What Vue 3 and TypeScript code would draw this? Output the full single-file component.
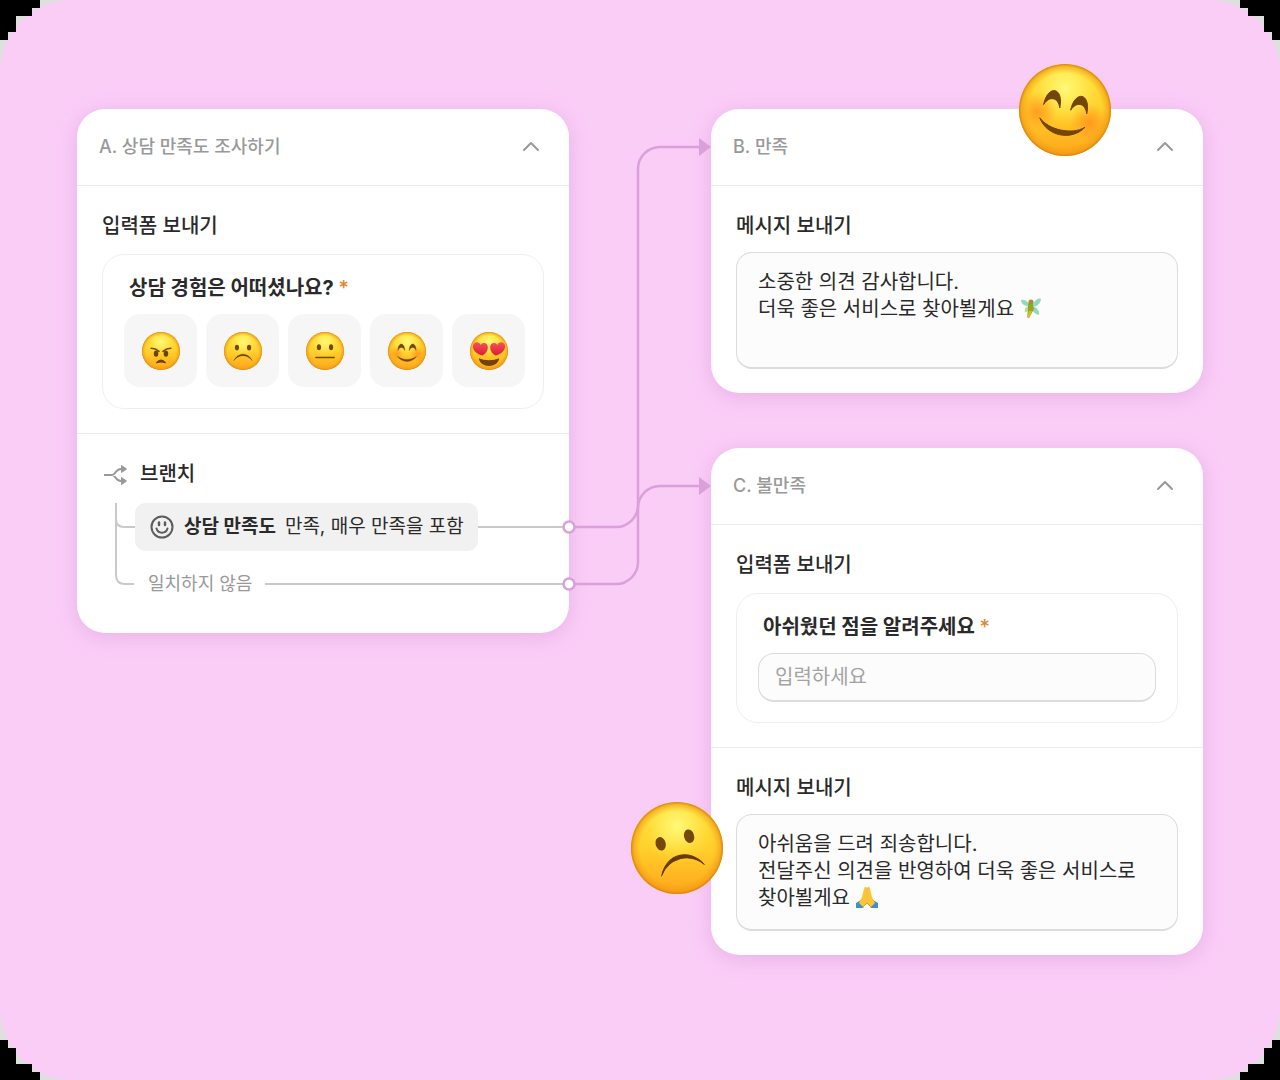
<script setup lang="ts">
import { ref } from 'vue'

interface Rating {
  id: string
  label: string
}

const ratings: Rating[] = [
  { id: 'angry', label: '매우 불만족' },
  { id: 'sad', label: '불만족' },
  { id: 'neutral', label: '보통' },
  { id: 'smile', label: '만족' },
  { id: 'love', label: '매우 만족' },
]

const corners: string[] = ['top-left', 'top-right', 'bottom-left', 'bottom-right']
const answer = ref('')
</script>

<template>
  <main class="page">
    <svg class="sprite" aria-hidden="true">
      <defs>
        <linearGradient id="face-base" x1="0" y1="0" x2="0" y2="1">
          <stop offset="0" stop-color="#ffdf3c" />
          <stop offset="0.5" stop-color="#ffd02c" />
          <stop offset="1" stop-color="#ffa51a" />
        </linearGradient>
        <radialGradient id="face-light" cx="0.5" cy="0.26" r="0.42">
          <stop offset="0" stop-color="#fff978" />
          <stop offset="0.4" stop-color="#fff060" stop-opacity="0.75" />
          <stop offset="1" stop-color="#ffdd35" stop-opacity="0" />
        </radialGradient>
        <radialGradient id="face-rim" cx="0.5" cy="0.5" r="0.5">
          <stop offset="0.8" stop-color="#f39a10" stop-opacity="0" />
          <stop offset="0.94" stop-color="#ee9612" stop-opacity="0.55" />
          <stop offset="1" stop-color="#d9820f" />
        </radialGradient>
        <radialGradient id="blush">
          <stop offset="0" stop-color="#ff7c18" stop-opacity="0.6" />
          <stop offset="0.4" stop-color="#ff841a" stop-opacity="0.4" />
          <stop offset="1" stop-color="#ff8a1a" stop-opacity="0" />
        </radialGradient>
        <linearGradient id="heart" x1="0" y1="0" x2="0" y2="1">
          <stop offset="0" stop-color="#f9505c" />
          <stop offset="1" stop-color="#d81f33" />
        </linearGradient>
      </defs>
      <symbol id="face" viewBox="0 0 100 100">
        <circle cx="50" cy="50" r="50" fill="url(#face-base)" />
        <circle cx="50" cy="50" r="50" fill="url(#face-light)" />
        <circle cx="50" cy="50" r="50" fill="url(#face-rim)" />
      </symbol>
      <symbol id="angry" viewBox="0 0 100 100">
        <ellipse cx="37" cy="57" rx="6" ry="8" fill="#6d420b" />
        <ellipse cx="63" cy="57" rx="6" ry="8" fill="#6d420b" />
        <path d="M24 43C30 43 38 45 45 51M76 43C70 43 62 45 55 51" fill="none" stroke="#7b4a0c" stroke-width="4" stroke-linecap="round" />
        <path d="M38 81Q50 67 62 81Q50 77 38 81Z" fill="#6d420b" stroke="#6d420b" stroke-width="3" stroke-linejoin="round" />
      </symbol>
      <symbol id="sad" viewBox="0 0 100 100">
        <ellipse cx="34" cy="41" rx="5.5" ry="7.5" fill="#74470c" />
        <ellipse cx="66" cy="41" rx="5.5" ry="7.5" fill="#74470c" />
        <path d="M26 75C37 53 63 53 74 75C62 58 38 58 26 75Z" fill="#673b08" stroke="#673b08" stroke-linejoin="round" />
      </symbol>
      <symbol id="neutral" viewBox="0 0 100 100">
        <ellipse cx="34" cy="40" rx="5.5" ry="8" fill="#74470c" />
        <ellipse cx="66" cy="40" rx="5.5" ry="8" fill="#74470c" />
        <path d="M26 67H74" stroke="#74470c" stroke-width="4" stroke-linecap="round" />
      </symbol>
      <symbol id="smile" viewBox="0 0 100 100">
        <circle cx="21" cy="58" r="21" fill="url(#blush)" />
        <circle cx="79" cy="58" r="21" fill="url(#blush)" />
        <path d="M26 49C26 26 44 26 44 49C40 38 30 38 26 49ZM56 49C56 26 74 26 74 49C70 38 60 38 56 49Z" fill="#744508" stroke="#744508" stroke-linejoin="round" />
        <path d="M25 64C37 75 63 75 75 64C64 82 36 82 25 64Z" fill="#744508" stroke="#744508" stroke-linejoin="round" />
      </symbol>
      <symbol id="love" viewBox="0 0 100 100">
        <path d="M23 69C38 76 62 76 77 69C73 96 27 96 23 69Z" fill="#72430c" />
        <path d="M33 62C18 59 5 47 8 35C11 24 25 25 28 34C34 25 47 29 47 40C47 50 40 57 33 62Z" fill="url(#heart)" />
        <path d="M67 62C82 59 95 47 92 35C89 24 75 25 72 34C66 25 53 29 53 40C53 50 60 57 67 62Z" fill="url(#heart)" />
      </symbol>
      <symbol id="chevron" viewBox="0 0 24 24">
        <path d="M5 15L12 8L19 15" fill="none" stroke="#989898" stroke-width="2" stroke-linecap="round" stroke-linejoin="round" />
      </symbol>
    </svg>

    <div class="canvas">
      <section class="card">
        <header class="card-head">
          <h2>A. 상담 만족도 조사하기</h2>
          <button class="toggle" type="button" aria-label="접기"><svg viewBox="0 0 24 24"><use href="#chevron" /></svg></button>
        </header>
        <div class="block">
          <h3>입력폼 보내기</h3>
          <div class="panel">
            <p class="question">상담 경험은 어떠셨나요? <span class="required">*</span></p>
            <div class="ratings">
              <button v-for="rating in ratings" :key="rating.id" class="rating" type="button" :aria-label="rating.label">
                <svg viewBox="0 0 100 100"><use href="#face" /><use :href="'#' + rating.id" /></svg>
              </button>
            </div>
          </div>
        </div>
        <div class="block branch">
          <h3 class="branch-title">
            <svg class="branch-icon" viewBox="0 0 24 24" fill="none" stroke="#999" stroke-width="2">
              <path d="M0 13H8M18 7H17C11 7 12 13 8 13C12 13 11 19 17 19H18" />
              <path d="M17.500 3.500L22.500 7L17.500 10.500ZM17.500 15.500L22.500 19L17.500 22.500Z" fill="#999" stroke-width="1" stroke-linejoin="round" />
            </svg>
            브랜치
          </h3>
          <div class="tree">
            <svg class="tree-lines" viewBox="0 0 21 105" fill="none" stroke="#c9c9c9" stroke-width="2">
              <path d="M2 0V72Q2 81 11 81H20M2 16Q2 24 10 24H21" />
            </svg>
            <div class="rows">
              <div class="row">
                <div class="chip">
                  <svg class="chip-icon" viewBox="0 0 24 24" fill="none" stroke="#5c5c5c" stroke-width="2">
                    <circle cx="12" cy="12" r="10.500" />
                    <path d="M6.500 13.500C8 19 16 19 17.500 13.500" stroke-linecap="round" />
                    <path d="M9 7.500V10M15 7.500V10" stroke-width="2.500" stroke-linecap="round" />
                  </svg>
                  <b>상담 만족도</b>
                  <span>만족, 매우 만족을 포함</span>
                </div>
                <i class="line"></i>
              </div>
              <div class="row">
                <span class="otherwise">일치하지 않음</span>
                <i class="line"></i>
              </div>
            </div>
          </div>
        </div>
      </section>

      <svg class="links" viewBox="0 0 142 500" fill="none" stroke="#daa0da" stroke-width="2.500" aria-hidden="true">
        <path d="M0 418H47A22 22 0 0 0 69 396V60A22 22 0 0 1 91 38H132" />
        <path d="M0 475H47A22 22 0 0 0 69 453V399A22 22 0 0 1 91 377H132" />
        <path d="M130 29L142 38L130 47ZM130 368L142 377L130 386Z" fill="#daa0da" stroke="none" />
        <circle cx="0" cy="418" r="5.500" fill="#fff" />
        <circle cx="0" cy="475" r="5.500" fill="#fff" />
      </svg>

      <div class="stack">
        <section class="card">
          <svg class="sticker happy" viewBox="0 0 100 100" role="img" aria-label="만족">
            <use href="#face" />
            <use href="#smile" transform="rotate(12 50 50)" />
          </svg>
          <header class="card-head">
            <h2>B. 만족</h2>
            <button class="toggle" type="button" aria-label="접기"><svg viewBox="0 0 24 24"><use href="#chevron" /></svg></button>
          </header>
          <div class="block">
            <h3>메시지 보내기</h3>
            <div class="message" role="textbox" aria-multiline="true" contenteditable="true">
              소중한 의견 감사합니다.<br />더욱 좋은 서비스로 찾아뵐게요
              <svg class="inline-emoji" viewBox="0 0 22 22">
                <path d="M11 10C6 9 1 8 1 3C5 2 9 5 11 10ZM12 10C13 5 18 0 21 2C21 6 17 10 12 10ZM12 10C16 9 20 14 19 18C15 17 12 15 12 10Z" fill="#8fdcbc" />
                <path d="M9 10C6 9 4 12 5 15C8 15 9 13 9 10Z" fill="#b6dc8c" />
                <path d="M9 5Q13 3 13 8L14 12L9 21L7 20L8 13L8 8Z" fill="#95a526" />
                <path d="M9 14L12 14L9 21L7 20Z" fill="#dfb73d" />
                <circle cx="11" cy="5" r="2.500" fill="#a98a35" />
              </svg>
            </div>
          </div>
        </section>

        <section class="card">
          <svg class="sticker unhappy" viewBox="0 0 100 100" role="img" aria-label="불만족">
            <use href="#face" />
            <use href="#sad" transform="rotate(-15 50 50)" />
          </svg>
          <header class="card-head">
            <h2>C. 불만족</h2>
            <button class="toggle" type="button" aria-label="접기"><svg viewBox="0 0 24 24"><use href="#chevron" /></svg></button>
          </header>
          <div class="block">
            <h3>입력폼 보내기</h3>
            <div class="panel">
              <label class="question" for="answer">아쉬웠던 점을 알려주세요 <span class="required">*</span></label>
              <input id="answer" v-model="answer" class="answer" type="text" placeholder="입력하세요" />
            </div>
          </div>
          <div class="block">
            <h3>메시지 보내기</h3>
            <div class="message" role="textbox" aria-multiline="true" contenteditable="true">
              아쉬움을 드려 죄송합니다.<br />전달주신 의견을 반영하여 더욱 좋은 서비스로<br />찾아뵐게요
              <svg class="inline-emoji" viewBox="0 0 22 22">
                <path d="M0 17L5 14L9 19L7 22H0ZM22 17L17 14L13 19L15 22H22Z" fill="#3d8fd0" />
                <path d="M10.500 1Q8.500 0 8 3L6 11L3 17L7 21L10.500 17ZM11.500 1Q13.500 0 14 3L16 11L19 17L15 21L11.500 17Z" fill="#ffc42e" />
                <path d="M11 2V17L7 21M11 17L15 21" fill="none" stroke="#e29a18" />
              </svg>
            </div>
          </div>
        </section>
      </div>
    </div>

    <svg v-for="corner in corners" :key="corner" class="corner" :class="corner" viewBox="0 0 40 40" shape-rendering="crispEdges" aria-hidden="true">
      <path d="M0 0H40V8H32V16H16V32H8V40H0Z" />
    </svg>
  </main>
</template>

<style>
body {
  margin: 0;
}
</style>

<style scoped>
* {
  box-sizing: border-box;
}

.page {
  position: relative;
  min-height: 100vh;
  display: flex;
  overflow: hidden;
  background: #dde0dc;
  color: #2a2a2a;
  font-family: Inter, "Noto Sans CJK KR", sans-serif;
  font-size: 20px;
  line-height: 28px;
}

.sprite {
  position: absolute;
  width: 0;
  height: 0;
}

.canvas {
  flex: 1;
  display: grid;
  grid-template-columns: minmax(0, 1fr) 142px minmax(0, 1fr);
  align-items: start;
  padding: 109px 77px;
  border-radius: 72px;
  background: #facdf7;
}

.stack {
  display: grid;
  gap: 55px;
}

.card {
  position: relative;
  border-radius: 28px;
  background: #fff;
  box-shadow: 0 4px 20px rgba(190, 100, 190, 0.26);
}

.card-head {
  display: flex;
  align-items: center;
  justify-content: space-between;
  height: 77px;
  padding: 0 26px 0 22px;
  border-bottom: 1px solid #ebebeb;
}

h2,
h3,
p {
  margin: 0;
}

h2 {
  color: #999;
  font-size: 18px;
  font-weight: 500;
}

h3 {
  font-size: 20px;
  font-weight: 500;
}

button {
  padding: 0;
  border: 0;
  background: none;
}

.toggle {
  display: block;
  width: 24px;
  height: 24px;
}

.toggle svg {
  display: block;
}

.block {
  padding: 26px 25px 24px;
}

.block + .block {
  border-top: 1px solid #ebebeb;
}

.panel {
  margin-top: 14px;
  padding: 19px 21px 20px;
  border: 1px solid #efefef;
  border-radius: 22px;
}

.question {
  display: block;
  padding-left: 5px;
  font-weight: 700;
}

.required {
  color: #e0862f;
  font-weight: 500;
}

.ratings {
  display: flex;
  gap: 9px;
  margin: 12px 0 1px;
}

.rating {
  flex: 0 0 73px;
  display: flex;
  align-items: center;
  justify-content: center;
  height: 73px;
  border-radius: 16px;
  background: #f6f6f6;
}

.rating svg {
  width: 38px;
  height: 38px;
}

.message {
  min-height: 117px;
  margin-top: 12px;
  padding: 16px 21px;
  border: 1px solid #dcdcdc;
  border-bottom-width: 2px;
  border-radius: 16px;
  background: #fcfcfc;
  line-height: 27px;
}

.inline-emoji {
  width: 22px;
  height: 22px;
  vertical-align: -3px;
}

.answer {
  display: block;
  width: 100%;
  height: 49px;
  margin-top: 12px;
  padding: 0 16px;
  border: 1px solid #dcdcdc;
  border-bottom-width: 2px;
  border-radius: 16px;
  background: #fcfcfc;
  color: inherit;
  font: inherit;
}

.answer::placeholder {
  color: #a3a3a3;
  opacity: 1;
}

.branch {
  padding-right: 0;
}

.branch-title {
  display: flex;
  align-items: center;
  gap: 12px;
  padding-left: 2px;
}

.branch-icon {
  width: 24px;
  height: 24px;
}

.tree {
  display: flex;
  margin-top: 15px;
  padding: 0 0 1px 12px;
}

.tree-lines {
  width: 21px;
  height: 105px;
}

.rows {
  flex: 1;
  display: grid;
  gap: 9px;
}

.row {
  display: flex;
  align-items: center;
  height: 48px;
}

.chip {
  display: flex;
  align-items: center;
  height: 48px;
  padding: 0 14px 0 15px;
  border-radius: 10px;
  background: #f1f1f1;
  font-size: 19px;
}

.chip-icon {
  width: 24px;
  height: 24px;
  margin-right: 10px;
}

.chip b {
  margin-right: 9px;
}

.line {
  flex: 1;
  height: 2px;
  background: #c9c9c9;
}

.otherwise {
  padding: 0 13px;
  color: #999;
  font-size: 18px;
}

.links {
  position: relative;
  z-index: 1;
  width: 142px;
  height: 500px;
  overflow: visible;
}

.sticker {
  position: absolute;
  width: 92px;
  height: 92px;
}

.happy {
  top: -45px;
  right: 92px;
}

.unhappy {
  top: 354px;
  left: -80px;
}

.corner {
  position: absolute;
  width: 40px;
  height: 40px;
}

.top-left {
  top: 0;
  left: 0;
}

.top-right {
  top: 0;
  right: 0;
  transform: scaleX(-1);
}

.bottom-left {
  bottom: 0;
  left: 0;
  transform: scaleY(-1);
}

.bottom-right {
  right: 0;
  bottom: 0;
  transform: scale(-1);
}
</style>
